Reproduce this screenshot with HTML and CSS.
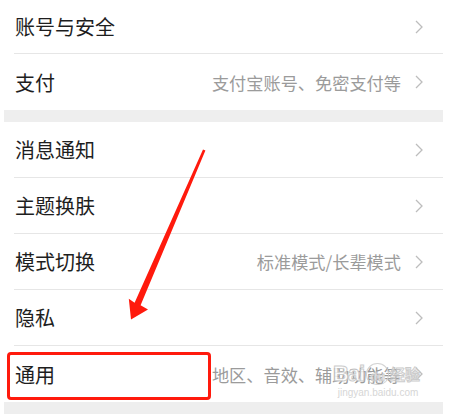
FILE: index.html
```html
<!DOCTYPE html>
<html lang="zh-CN">
<head>
  <meta charset="UTF-8">
  <meta name="viewport" content="width=device-width, initial-scale=1.0">
  <title>设置</title>
  <link rel="stylesheet" href="styles.css">
</head>
<body>
<div class="screen">
  <div class="group">
    <div class="row first">
      <div class="row-inner">
        <span class="row-title">账号与安全</span>
        <svg class="chevron" width="8" height="14" viewBox="0 0 8 14"><polyline points="1 1 7 7 1 13"></polyline></svg>
      </div>
    </div>
    <div class="row">
      <div class="row-inner">
        <span class="row-title">支付</span>
        <span class="row-value">支付宝账号、免密支付等</span>
        <svg class="chevron" width="8" height="14" viewBox="0 0 8 14"><polyline points="1 1 7 7 1 13"></polyline></svg>
      </div>
    </div>
  </div>

  <div class="group">
    <div class="row">
      <div class="row-inner">
        <span class="row-title">消息通知</span>
        <svg class="chevron" width="8" height="14" viewBox="0 0 8 14"><polyline points="1 1 7 7 1 13"></polyline></svg>
      </div>
    </div>
    <div class="row">
      <div class="row-inner">
        <span class="row-title">主题换肤</span>
        <svg class="chevron" width="8" height="14" viewBox="0 0 8 14"><polyline points="1 1 7 7 1 13"></polyline></svg>
      </div>
    </div>
    <div class="row">
      <div class="row-inner">
        <span class="row-title">模式切换</span>
        <span class="row-value">标准模式/长辈模式</span>
        <svg class="chevron" width="8" height="14" viewBox="0 0 8 14"><polyline points="1 1 7 7 1 13"></polyline></svg>
      </div>
    </div>
    <div class="row">
      <div class="row-inner">
        <span class="row-title">隐私</span>
        <svg class="chevron" width="8" height="14" viewBox="0 0 8 14"><polyline points="1 1 7 7 1 13"></polyline></svg>
      </div>
    </div>
    <div class="row">
      <div class="row-inner">
        <span class="row-title">通用</span>
        <span class="row-value">地区、音效、辅助功能等</span>
        <svg class="chevron" width="8" height="14" viewBox="0 0 8 14"><polyline points="1 1 7 7 1 13"></polyline></svg>
      </div>
    </div>
  </div>

  <!-- annotations drawn over the screenshot -->
  <div class="highlight-box"></div>
  <svg class="arrow" width="450" height="414" viewBox="0 0 450 414">
    <polygon points="203,149.4 205.4,150.6 140.6,305.2 148,309.5 131,319.5 128.8,298.8 134.6,302.8"></polygon>
  </svg>

  <div class="watermark">
    <div class="wm-logo"><span class="wm-bai">Bai</span><span class="wm-paw">du</span><span class="wm-cn">经验</span></div>
    <div class="wm-url">jingyan.baidu.com</div>
  </div>
</div>
</body>
</html>
```

FILE: styles.css
```css
:root {
  --band-color: #eeeeee;
  --divider-color: #e6e6e6;
  --text-color: #1e1e1e;
  --value-color: #9b9b9b;
  --chevron-color: #bdbdbd;
  --mark-red: #ff1a0d;
}

body {
  margin: 0;
  padding: 0;
  background: #fff;
  font-family: "Noto Sans CJK SC", "Noto Sans", sans-serif;
}

.screen {
  position: relative;
  width: 439px;
  height: 414px;
  margin-left: 4px;
  overflow: hidden;
  background: var(--band-color);
}

.group {
  background: #fff;
  margin-bottom: 12px;
}

.row {
  display: flex;
  height: 56px;
  padding-left: 10px;
  background: #fff;
}

.row.first {
  height: 54px;
}

.row-inner {
  flex: 1;
  display: flex;
  align-items: center;
  padding-left: 1px;
  padding-right: 20px;
  border-bottom: 1px solid var(--divider-color);
}

.row:last-child .row-inner {
  border-bottom: none;
}

.row-title {
  flex: 1;
  font-size: 20px;
  color: var(--text-color);
}

.row-value {
  font-size: 17.2px;
  color: var(--value-color);
  margin-right: 14px;
}

.chevron {
  flex-shrink: 0;
  fill: none;
  stroke: var(--chevron-color);
  stroke-width: 1.3;
}

.highlight-box {
  position: absolute;
  left: 3px;
  top: 352px;
  width: 198px;
  height: 42px;
  border: 3px solid var(--mark-red);
  border-radius: 4px;
}

.arrow {
  position: absolute;
  left: -4px;
  top: 0;
  fill: var(--mark-red);
}

.watermark {
  position: absolute;
  left: 329px;
  top: 360px;
  width: 90px;
  white-space: nowrap;
  font-family: "Liberation Sans", sans-serif;
  opacity: 0.85;
}

.wm-logo {
  display: flex;
  align-items: center;
  height: 27px;
  font-weight: bold;
  color: #fff;
  -webkit-text-stroke: 1px #c4c4c4;
}

.wm-bai {
  font-size: 22px;
  letter-spacing: -1px;
}

.wm-paw {
  font-size: 12px;
  margin: 0 1px 0 2px;
  padding: 7px 3px 0;
  border-radius: 50% 50% 45% 45%;
  border: 1px solid #cccccc;
  line-height: 13px;
}

.wm-cn {
  font-family: "Noto Sans CJK SC", sans-serif;
  font-size: 15px;
}

.wm-url {
  font-size: 10px;
  color: #cfcfcf;
  text-align: center;
}
```
